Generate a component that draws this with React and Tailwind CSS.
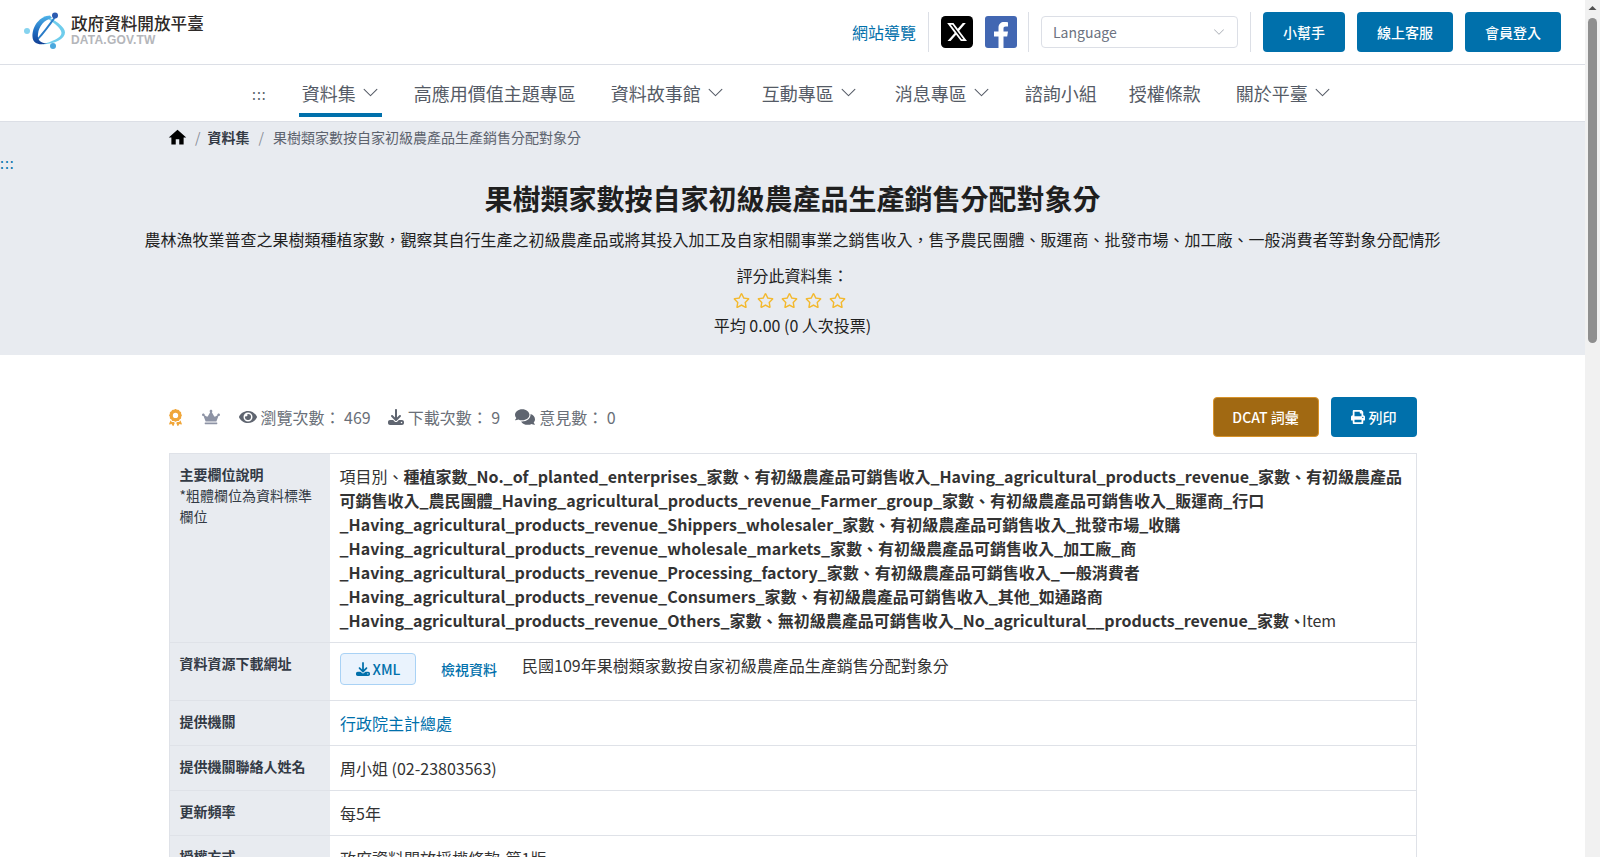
import React from "react";
import { FaEye, FaComments, FaCrown, FaPrint, FaRegStar } from "react-icons/fa";
import { FaAward, FaDownload } from "react-icons/fa6";
import { MdHome } from "react-icons/md";
import { BsChevronDown } from "react-icons/bs";

function Logo() {
  return (
    <svg width="42" height="40" viewBox="24 13 42 40" className="shrink-0">
      <defs>
        <linearGradient id="lg" x1="0" y1="0" x2="0" y2="1">
          <stop offset="0" stopColor="#4fb4ea" />
          <stop offset="0.55" stopColor="#1f6cc0" />
          <stop offset="1" stopColor="#123f94" />
        </linearGradient>
      </defs>
      <path d="M43 17 C55 20 65 28 65 33.500 C65 40 55 45 42 45.500 C52 42.500 61.500 39 61.500 34 C61.500 29 52 22 43 17 Z" fill="#6fcdec" />
      <path d="M54 18 C48 26 42 34 36 41 L37.500 41.800 C44 35 50 27 55.500 19 Z" fill="#2a7cc8" />
      <path d="M50 16.500 C40 17 32 27 32.500 38 C33 44.500 39 46.500 47 44.500 C41 44.500 37 41 38 35 C39 27 44 21 52 19 Z" fill="url(#lg)" />
      <circle cx="55" cy="16.500" r="3" fill="#2c5bb0" />
      <circle cx="27" cy="32" r="3" fill="#86d3ef" />
      <circle cx="53" cy="47" r="3" fill="#4aa8de" />
    </svg>
  );
}

function XIcon() {
  return (
    <svg width="32" height="32" viewBox="0 0 32 32" className="shrink-0">
      <rect width="32" height="32" rx="4.500" fill="#000" />
      <g transform="translate(5 5) scale(0.92)">
        <path fill="#fff" d="M18.244 2.250h3.308l-7.227 8.260 8.502 11.240H16.170l-5.214-6.817L4.990 21.750H1.680l7.730-8.835L1.254 2.250H8.080l4.713 6.231zm-1.161 17.520h1.833L7.084 4.126H5.117z" />
      </g>
    </svg>
  );
}

function FbIcon() {
  return (
    <svg width="32" height="32" viewBox="0 0 32 32" className="shrink-0">
      <rect width="32" height="32" rx="3" fill="#4267b2" />
      <path fill="#fff" d="M13.500 32 V20.500 H9 V15.500 H13.500 V11.500 C13.500 8 16 6 19 6 C20.800 6 22.300 6.200 23 6.300 V10.500 H20.800 C19 10.500 18.500 11.400 18.500 12.800 V15.500 H23 L22.200 20.500 H18.500 V32 Z" />
    </svg>
  );
}

function NavItem({ children, chevron, active }) {
  return (
    <a className={`flex items-center gap-[6px] h-[52px] px-[3px] border-b-4 ${active ? "border-[#0070ab]" : "border-transparent"} pt-[8px] text-[18px] text-[#555b66]`}>
      <span>{children}</span>
      {chevron && <BsChevronDown className="text-[17px] text-[#555b66] -mt-[2px]" />}
    </a>
  );
}

function Row({ label, sub, children, cls = "" }) {
  return (
    <tr className="border-b border-[#dfe2e8] last:border-b-0">
      <th className="w-[161px] align-top bg-[#e8ebf0] text-left pl-[10px] pr-2 pt-[10px] pb-2 text-[14px] leading-[21px] font-bold text-[#333a45]">
        {label}
        {sub && <div className="font-normal">{sub}</div>}
      </th>
      <td className={`align-top pr-2 text-[16px] leading-[24px] text-[#333333] ${cls}`}>{children}</td>
    </tr>
  );
}

export default function App() {
  const b = (s) => <b className="font-bold">{s}</b>;
  return (
    <div className="flex h-screen overflow-hidden bg-white font-['Noto_Sans_CJK_TC','Noto_Sans',sans-serif] text-[#333333]">
      <div className="flex-1 min-w-0 overflow-hidden">
        <header className="h-[65px] border-b border-[#dcdfe6] flex items-center pl-6 pr-6">
          <a className="flex items-center gap-[5px]">
            <Logo />
            <div className="-mt-[4px]">
              <div className="text-[16.6px] leading-[20px] mb-px font-medium text-[#2e2a28]">政府資料開放平臺</div>
              <div className="text-[12px] leading-[13px] font-bold tracking-[0.2px] text-[#b4b6ba] font-['Liberation_Sans',sans-serif]">DATA.GOV.TW</div>
            </div>
          </a>
          <div className="flex-1" />
          <a className="text-[16px] text-[#0070ab] mr-3">網站導覽</a>
          <div className="w-px h-10 bg-[#dcdfe6]" />
          <div className="flex items-center gap-3 pl-3 pr-[11px]">
            <XIcon />
            <FbIcon />
          </div>
          <div className="w-px h-10 bg-[#dcdfe6]" />
          <div className="mx-3 w-[197px] h-[32px] border border-[#dcdfe6] rounded flex items-center justify-between pl-[11px] pr-3 text-[14px] text-[#6c7280]">
            <span>Language</span>
            <BsChevronDown className="text-[12px] text-[#a9adb5]" />
          </div>
          <div className="w-px h-10 bg-[#dcdfe6]" />
          <div className="flex gap-3 ml-3">
            <button className="w-[82px] h-10 rounded bg-[#0070ab] text-white text-[14px] font-medium">小幫手</button>
            <button className="w-[96px] h-10 rounded bg-[#0070ab] text-white text-[14px] font-medium">線上客服</button>
            <button className="w-[96px] h-10 rounded bg-[#0070ab] text-white text-[14px] font-medium">會員登入</button>
          </div>
        </header>

        <nav className="h-[57px] border-b border-[#dcdfe6] flex items-start pl-[252px] text-[#555b66]">
          <span className="text-[14px] mr-[32px] tracking-[1px] pt-[19px]">:::</span>
          <div className="flex items-start">
            <div className="mr-[29px]"><NavItem chevron active>資料集</NavItem></div>
            <div className="mr-[29px]"><NavItem>高應用價值主題專區</NavItem></div>
            <div className="mr-[32px]"><NavItem chevron>資料故事館</NavItem></div>
            <div className="mr-[32px]"><NavItem chevron>互動專區</NavItem></div>
            <div className="mr-[29px]"><NavItem chevron>消息專區</NavItem></div>
            <div className="mr-[26px]"><NavItem>諮詢小組</NavItem></div>
            <div className="mr-[29px]"><NavItem>授權條款</NavItem></div>
            <NavItem chevron>關於平臺</NavItem>
          </div>
        </nav>

        <section className="h-[233px] bg-[#e8ebf0] relative">
          <div className="flex items-center pl-[167px] h-[30px] text-[14px]">
            <MdHome className="text-[21px] text-black" />
            <span className="ml-[7px] mr-[7px] text-[#8a8f98]">/</span>
            <b className="font-bold text-[#333a45]">資料集</b>
            <span className="mx-[9px] text-[#8a8f98]">/</span>
            <span className="text-[#5d636e]">果樹類家數按自家初級農產品生產銷售分配對象分</span>
          </div>
          <a className="absolute left-0 top-[31px] text-[14px] leading-5 tracking-[1px] text-[#0070ab]">:::</a>
          <h1 className="mt-[26px] text-center text-[28px] leading-[40px] font-bold text-[#1f1f1f]">果樹類家數按自家初級農產品生產銷售分配對象分</h1>
          <p className="mt-[9px] text-center text-[16px] leading-6 text-[#1f1f1f]">農林漁牧業普查之果樹類種植家數，觀察其自行生產之初級農產品或將其投入加工及自家相關事業之銷售收入，售予農民團體、販運商、批發市場、加工廠、一般消費者等對象分配情形</p>
          <div className="mt-[12px] text-center text-[16px] leading-6 text-[#1f1f1f]">評分此資料集：</div>
          <div className="mt-px pr-[7px] flex justify-center gap-[7px] h-[24px] items-center text-[#f3b92f] text-[17px]">
            <FaRegStar /><FaRegStar /><FaRegStar /><FaRegStar /><FaRegStar />
          </div>
          <div className="mt-px text-center text-[16px] leading-6 text-[#1f1f1f]">平均 0.00 (0 人次投票)</div>
        </section>

        <main className="mx-auto w-[1280px] px-4">
          <div className="mt-[42px] mb-4 h-10 flex items-center justify-between text-[16px] text-[#6a6f78]">
            <div className="flex items-center -ml-[2px]">
              <FaAward className="text-[17px] text-[#f0a63a] mr-[18px]" />
              <FaCrown className="text-[18px] text-[#8d93a5] mr-[19px]" />
              <FaEye className="text-[18px] text-[#5f6570] mr-[4px]" />
              <span>瀏覽次數： 469</span>
              <FaDownload className="text-[16px] text-[#5f6570] ml-[17px] mr-[4px]" />
              <span>下載次數： 9</span>
              <FaComments className="text-[20px] text-[#5f6570] ml-[15px] mr-[4px]" />
              <span>意見數： 0</span>
            </div>
            <div className="flex gap-3">
              <button className="w-[106px] h-10 rounded border border-[#d8932a] bg-[#a16912] text-white text-[14px] font-medium">DCAT 詞彙</button>
              <button className="w-[86px] h-10 rounded bg-[#0070ab] text-white text-[14px] font-medium flex items-center justify-center gap-1"><FaPrint className="text-[14px]" />列印</button>
            </div>
          </div>

          <table className="w-full border border-[#dfe2e8] border-collapse table-fixed">
            <colgroup><col className="w-[161px]" /><col /></colgroup>
            <tbody>
              <Row label="主要欄位說明" sub="*粗體欄位為資料標準欄位" cls="pl-[9.5px] pt-[10px] pb-[10px]">
                項目別、{b("種植家數_No._of_planted_enterprises_家數、")}{b("有初級農產品可銷售收入_Having_agricultural_products_revenue_家數、")}{b("有初級農產品可銷售收入_農民團體_Having_agricultural_products_revenue_Farmer_group_家數、")}{b("有初級農產品可銷售收入_販運商_行口_Having_agricultural_products_revenue_Shippers_wholesaler_家數、")}{b("有初級農產品可銷售收入_批發市場_收購_Having_agricultural_products_revenue_wholesale_markets_家數、")}{b("有初級農產品可銷售收入_加工廠_商_Having_agricultural_products_revenue_Processing_factory_家數、")}{b("有初級農產品可銷售收入_一般消費者_Having_agricultural_products_revenue_Consumers_家數、")}{b("有初級農產品可銷售收入_其他_如通路商_Having_agricultural_products_revenue_Others_家數、")}{b("無初級農產品可銷售收入_No_agricultural__products_revenue_家數、")}<span className="-ml-[3px]">Item</span>
              </Row>
              <Row label="資料資源下載網址" cls="pl-[10px] h-[58px] pt-[10px]">
                <div className="flex items-start">
                  <a className="w-[76px] h-[32px] border border-[#a9d2f5] bg-[#eaf3fd] rounded flex items-center justify-center gap-[3px] text-[14px] font-medium text-[#0070ab]"><FaDownload className="text-[14px]" />XML</a>
                  <a className="ml-[25px] mt-[4px] text-[14px] leading-[24px] font-medium text-[#0070ab]">檢視資料</a>
                  <span className="ml-[25px] leading-[24px]">民國109年果樹類家數按自家初級農產品生產銷售分配對象分</span>
                </div>
              </Row>
              <Row label="提供機關" cls="pl-[10px] h-[45px] pt-[10px]"><a className="text-[#0070ab]">行政院主計總處</a></Row>
              <Row label="提供機關聯絡人姓名" cls="pl-[10px] h-[45px] pt-[10px]">周小姐 (02-23803563)</Row>
              <Row label="更新頻率" cls="pl-[10px] h-[45px] pt-[10px]">每5年</Row>
              <Row label="授權方式" cls="pl-[10px] h-[45px] pt-[10px]">政府資料開放授權條款-第1版</Row>
            </tbody>
          </table>
        </main>
      </div>
      <aside className="w-[15px] shrink-0 bg-[#f1f1f1] flex flex-col items-center">
        <svg width="15" height="15" viewBox="0 0 15 15"><path d="M3.500 10 L7.500 6 L11.500 10 Z" fill="#505050" /></svg>
        <div className="mt-[3px] w-[9px] h-[325px] rounded-full bg-[#8f8f8f]" />
      </aside>
    </div>
  );
}
